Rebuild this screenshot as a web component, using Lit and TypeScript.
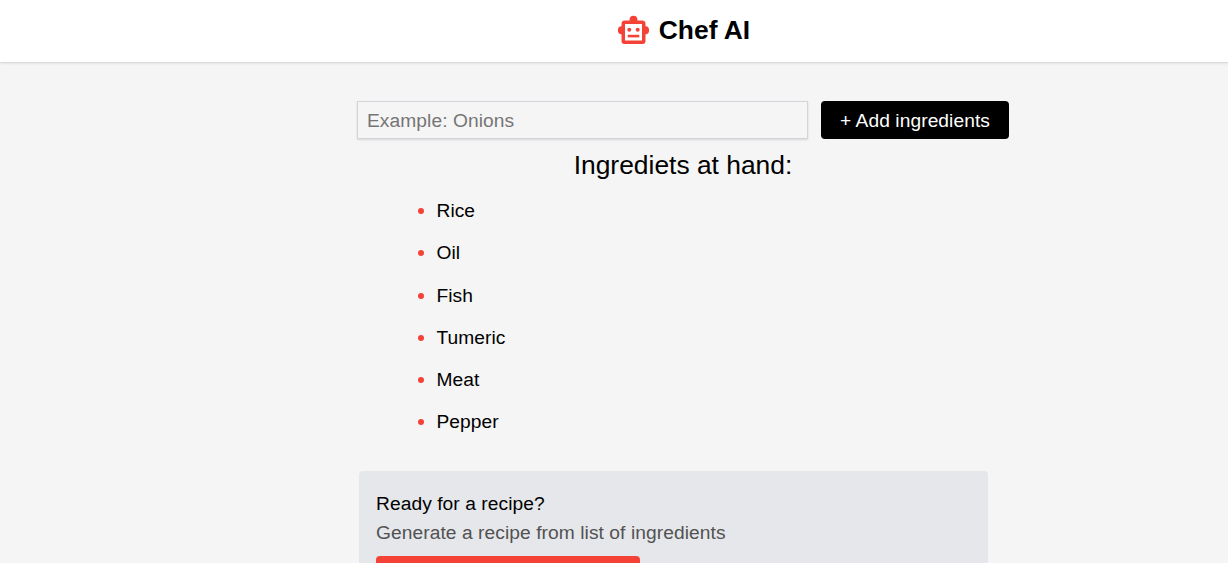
import { LitElement, html, css } from "lit";
import { customElement, state } from "lit/decorators.js";

@customElement("app-root")
export class AppRoot extends LitElement {
  static styles = css`
    :host {
      display: block;
      height: 563px;
      overflow: hidden;
      background: #f5f5f5;
      color: #000;
      font: 19.2px/28px "Liberation Sans", Arial, sans-serif;
      letter-spacing: 0.04px;
    }
    * { box-sizing: border-box; }
    .page { width: 1366px; }
    header {
      display: flex;
      align-items: center;
      justify-content: center;
      gap: 9px;
      height: 62px;
      padding: 0 0 2px 1px;
      background: #fff;
      box-shadow: 0 1px 3px rgba(0, 0, 0, 0.1), 0 1px 2px rgba(0, 0, 0, 0.06);
    }
    .logo { width: 33px; height: 30px; fill: #f44336; }
    h1 { margin: 0; font-size: 26.4px; line-height: 36px; font-weight: 700; letter-spacing: 0; }
    form {
      display: flex;
      justify-content: center;
      gap: 13px;
      padding-top: 39px;
    }
    input {
      width: 451px;
      height: 38px;
      padding: 1px 9px 0;
      border: 1px solid #d1d5db;
      background: transparent;
      box-shadow: 0 1px 2px rgba(0, 0, 0, 0.12);
      font: inherit;
      letter-spacing: 0.07px;
      outline: none;
    }
    input::placeholder { color: #757575; }
    form button {
      width: 188px;
      height: 38px;
      padding: 1px 0 0;
      border: 0;
      border-radius: 4px;
      background: #000;
      color: #fff;
      font: inherit;
      letter-spacing: 0.07px;
    }
    h2 { margin: 8px 0 0; font-size: 26.4px; line-height: 36px; font-weight: 400; text-align: center; letter-spacing: 0; }
    ul { list-style: none; margin: 14.2px 0 0 418px; padding: 0; }
    li { display: flex; align-items: center; gap: 12.5px; height: 28px; margin-bottom: 14.2px; }
    li::before { content: ""; width: 6px; height: 6px; border-radius: 50%; background: #f44336; }
    .ready {
      width: 629px;
      height: 150px;
      margin: 34.8px 0 0 359px;
      padding: 18px 17px;
      border-radius: 4px;
      background: #e5e7eb;
    }
    .ready p { margin: 0; line-height: 29px; letter-spacing: 0.07px; }
    .ready .hint { color: #525252; }
    .generate { display: block; width: 264px; height: 38px; margin-top: 9px; border: 0; border-radius: 4px; background: #f44336; }
  `;

  @state() private ingredients = ["Rice", "Oil", "Fish", "Tumeric", "Meat", "Pepper"];

  render() {
    return html`
      <div class="page">
        <header>
          <svg class="logo" viewBox="0 0 33 30" aria-hidden="true">
            <path fill-rule="evenodd" d="M7.9 5.5H12.6V4.6a3.9 3.9 0 0 1 7.8 0V5.5H25.1a3.4 3.4 0 0 1 3.4 3.4V11.2a3.6 4 0 0 1 0 8V26.1a2.9 2.9 0 0 1-2.9 2.9H7.4a2.9 2.9 0 0 1-2.9-2.9V19.2a3.6 4 0 0 1 0-8V8.9a3.4 3.4 0 0 1 3.4-3.4ZM8 9V25.5H25V9Z"></path>
            <circle cx="12.3" cy="14.8" r="2"></circle>
            <circle cx="20.7" cy="14.8" r="2"></circle>
            <rect x="10.7" y="19.8" width="11.6" height="2.6"></rect>
          </svg>
          <h1>Chef AI</h1>
        </header>
        <main>
          <form>
            <input type="text" placeholder="Example: Onions" />
            <button type="button">+ Add ingredients</button>
          </form>
          <h2>Ingrediets at hand:</h2>
          <ul>${this.ingredients.map((name) => html`<li>${name}</li>`)}</ul>
          <section class="ready">
            <p>Ready for a recipe?</p>
            <p class="hint">Generate a recipe from list of ingredients</p>
            <button class="generate" aria-label="Generate"></button>
          </section>
        </main>
      </div>
    `;
  }
}
